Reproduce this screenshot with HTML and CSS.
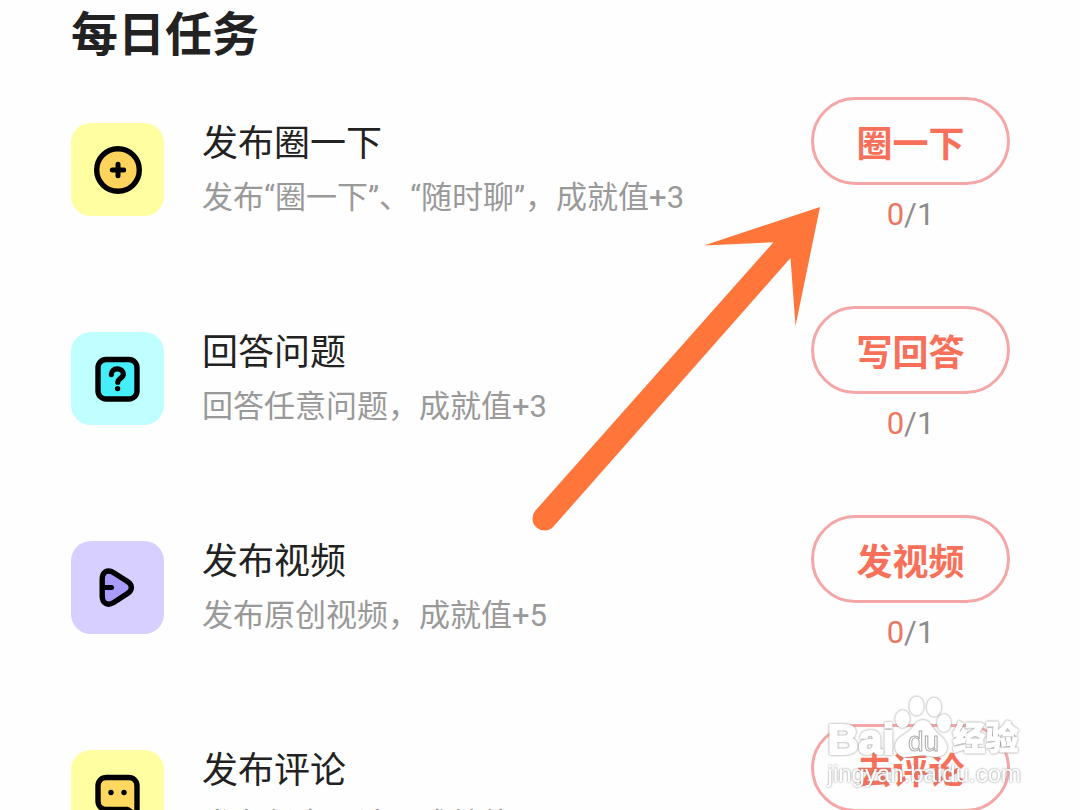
FILE: index.html
```
<!DOCTYPE html>
<html lang="zh-CN">
<head>
    <meta charset="UTF-8">
    <meta name="viewport" content="width=device-width, initial-scale=1.0">
    <title>每日任务</title>
    <link rel="stylesheet" href="styles.css">
</head>
<body>
    <main class="screen">
        <h1 class="heading">每日任务</h1>

        <ul class="tasks">
            <li class="task">
                <div class="task-icon yellow">
                    <svg viewBox="0 0 93 93" aria-hidden="true">
                        <circle cx="47" cy="47" r="21.3" fill="#ffd45c" stroke="#000" stroke-width="5.4"/>
                        <path d="M47 41.3v11.4M41.3 47h11.4" fill="none" stroke="#000" stroke-width="5" stroke-linecap="round"/>
                    </svg>
                </div>
                <div class="task-text">
                    <h2 class="task-title">发布圈一下</h2>
                    <p class="task-desc">发布“圈一下”、“随时聊”，成就值+3</p>
                </div>
                <div class="task-action">
                    <button class="task-button" type="button">圈一下</button>
                    <div class="task-count"><span class="done">0</span>/1</div>
                </div>
            </li>

            <li class="task">
                <div class="task-icon cyan">
                    <svg viewBox="0 0 93 93" aria-hidden="true">
                        <rect x="27" y="27.5" width="39" height="39.5" rx="8" fill="#45eef8" stroke="#000" stroke-width="5.4"/>
                        <path d="M40.3 42.600c0-3.300 2.400-5.800 5.800-5.800s6.200 2.300 6.200 5.400c0 4-5.500 4.200-5.500 8" fill="none" stroke="#000" stroke-width="5.200" stroke-linecap="round" stroke-linejoin="round"/>
                        <circle cx="46.6" cy="56.6" r="2.700"/>
                    </svg>
                </div>
                <div class="task-text">
                    <h2 class="task-title">回答问题</h2>
                    <p class="task-desc">回答任意问题，成就值+3</p>
                </div>
                <div class="task-action">
                    <button class="task-button" type="button">写回答</button>
                    <div class="task-count"><span class="done">0</span>/1</div>
                </div>
            </li>

            <li class="task">
                <div class="task-icon purple">
                    <svg viewBox="0 0 93 93" aria-hidden="true">
                        <path d="M31.200 38.500c0-8 5.500-10.500 11.500-6.800L56.500 40.500c5.200 3.500 5.200 8.500 0 12L42.700 61.500c-6 3.700-11.500 1.200-11.500-6.800z" fill="#a99bfa" stroke="#000" stroke-width="5.400" stroke-linejoin="round"/>
                        <path d="M31.500 46.500h9" fill="none" stroke="#000" stroke-width="5" stroke-linecap="round"/>
                    </svg>
                </div>
                <div class="task-text">
                    <h2 class="task-title">发布视频</h2>
                    <p class="task-desc">发布原创视频，成就值+5</p>
                </div>
                <div class="task-action">
                    <button class="task-button" type="button">发视频</button>
                    <div class="task-count"><span class="done">0</span>/1</div>
                </div>
            </li>

            <li class="task">
                <div class="task-icon yellow">
                    <svg viewBox="0 0 93 93" aria-hidden="true">
                        <path d="M35.500 27.500H57.500c5 0 8.500 3.500 8.500 8.500V66L56.500 59.500H35.500c-5 0-8.500-3.500-8.500-8.500V36c0-5 3.500-8.500 8.500-8.500z" fill="#ffd860" stroke="#000" stroke-width="5.400" stroke-linejoin="round"/>
                        <circle cx="40" cy="42.500" r="2.700"/>
                        <circle cx="53" cy="42.500" r="2.700"/>
                    </svg>
                </div>
                <div class="task-text">
                    <h2 class="task-title">发布评论</h2>
                    <p class="task-desc">发布任意评论，成就值+1</p>
                </div>
                <div class="task-action">
                    <button class="task-button" type="button">去评论</button>
                    <div class="task-count"><span class="done">0</span>/1</div>
                </div>
            </li>
        </ul>

        <svg class="arrow" viewBox="0 0 290 326" aria-hidden="true">
            <path d="M288 1 172 39.500 241.500 36.200 3.500 304.500A11.500 11.500 0 0 0 21.500 320.500L258.500 52 263.500 120z" fill="#ff753a"/>
        </svg>

        <div class="watermark">
            <div class="brand">
                <span class="brand-name">Bai</span>
                <span class="paw">
                    <svg viewBox="0 0 58 66" aria-hidden="true">
                        <ellipse cx="8.500" cy="24" rx="7.300" ry="9"/>
                        <ellipse cx="22.500" cy="11" rx="7.300" ry="9.500"/>
                        <ellipse cx="40" cy="12" rx="7.300" ry="9.500"/>
                        <ellipse cx="50" cy="28" rx="7" ry="9"/>
                        <path d="M29 25c-6 0-8 4-11 8-4 5-13 8-16 14-3 8 2 15 10 15 6 0 10-1.500 16-1.500s9 1.500 14 1.500c9 0 13-7 10-14-2-6-9-9-12-14-3-4-5-9-11-9z"/>
                    </svg>
                    <span class="paw-text">du</span>
                </span>
                <span class="brand-cn">经验</span>
            </div>
            <div class="brand-url">jingyan.baidu.com</div>
        </div>
    </main>
</body>
</html>
```
FILE: styles.css
```
* { margin: 0; padding: 0; box-sizing: border-box; }

body {
    font-family: Roboto, "Noto Sans CJK SC", sans-serif;
    background: #fefefe;
    color: #222;
}

.screen {
    position: relative;
    height: 100vh;
    padding: 0 70px 0 71px;
    overflow: hidden;
}

.heading {
    font-size: 47px;
    line-height: 70px;
    font-weight: 700;
}

.tasks {
    display: flex;
    flex-direction: column;
    gap: 64px;
    padding-top: 27px;
    list-style: none;
}

.task {
    display: flex;
    align-items: center;
}

.task-icon {
    flex: none;
    width: 93px;
    height: 93px;
    border-radius: 20px;
}

.task-icon svg {
    display: block;
    width: 100%;
    height: 100%;
}

.yellow { background: #fffea0; }
.cyan { background: #c0ffff; }
.purple { background: #d6cfff; }

.task-text {
    flex: 1;
    padding: 2px 0 0 38px;
}

.task-title {
    font-size: 36px;
    line-height: 54px;
    font-weight: 400;
}

.task-desc {
    font-size: 31px;
    line-height: 54px;
    color: #999;
}

.task-action {
    flex: none;
    width: 199px;
    padding-bottom: 7px;
    text-align: center;
}

.task-button {
    display: block;
    width: 100%;
    height: 88px;
    border: 3px solid #f5a6a6;
    border-radius: 44px;
    background: transparent;
    color: #f8705a;
    font-family: inherit;
    font-size: 36px;
    font-weight: 700;
}

.task-count {
    margin-top: 10px;
    font-size: 31px;
    line-height: 40px;
    color: #8c8c8c;
}

.done { color: #ed7660; }

/* Pointer laid over the list, kept next to the buttons */
.arrow {
    position: absolute;
    top: 206px;
    right: 258px;
    width: 290px;
    height: 326px;
    pointer-events: none;
}

/* Watermark */
.watermark {
    position: absolute;
    right: 59px;
    bottom: 23px;
    color: #fff;
    pointer-events: none;
    filter: drop-shadow(0 0 1px #888);
}

.brand {
    display: flex;
    align-items: flex-end;
    height: 66px;
}

.brand-name {
    font-family: "Liberation Sans", sans-serif;
    font-size: 43px;
    line-height: 44px;
    font-weight: 700;
    -webkit-text-stroke: 2px #fff;
}

.paw {
    position: relative;
    width: 58px;
    height: 66px;
}

.paw svg {
    display: block;
    width: 58px;
    height: 66px;
    fill: #fff;
}

.paw-text {
    position: absolute;
    left: 0;
    right: 0;
    bottom: 6px;
    font-family: "Liberation Sans", sans-serif;
    font-size: 28px;
    line-height: 26px;
    text-align: center;
    -webkit-text-stroke: 1px #aaa;
}

.brand-cn {
    font-size: 33px;
    line-height: 44px;
    font-weight: 900;
    -webkit-text-stroke: 1px #fff;
}

.brand-url {
    font-family: "Liberation Sans", sans-serif;
    font-size: 24px;
    line-height: 26px;
}
```
